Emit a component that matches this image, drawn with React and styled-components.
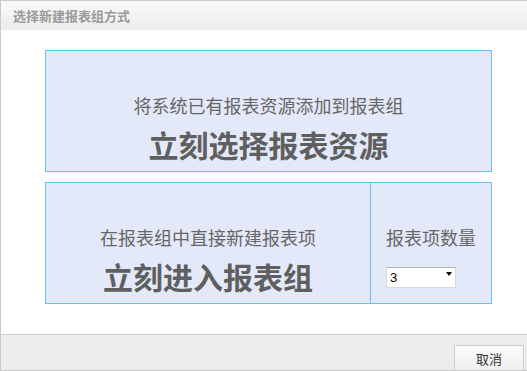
import React from "react";
import styled, { createGlobalStyle } from "styled-components";

const Global = createGlobalStyle`
  html, body { margin: 0; padding: 0; background: #fff; }
  body { font-family: "Noto Sans CJK SC", "Noto Sans", sans-serif; }
  * { box-sizing: border-box; }
`;

const Window = styled.div`
  width: 527px;
  height: 371px;
  border: 1px solid #c9c9c9;
  border-right: none;
  display: flex;
  flex-direction: column;
  background: #fff;
  overflow: hidden;
`;

const TitleBar = styled.div`
  height: 29px;
  flex: none;
  display: flex;
  align-items: center;
  padding-left: 12px;
  background: linear-gradient(#fafafa, #ececec);
  color: #999;
  font-size: 13px;
  font-weight: bold;
`;

const Content = styled.div`
  flex: 1;
  display: flex;
  flex-direction: column;
  gap: 10px;
  padding: 20px 0 0 44px;
`;

const Card = styled.div`
  width: 447px;
  height: 122px;
  border: 1px solid #62c4f5;
  background: #e3e9f9;
  display: flex;
  cursor: pointer;
`;

const Panel = styled.div`
  flex: ${(p) => (p.$grow ? 1 : "none")};
  width: ${(p) => (p.$width ? p.$width : "auto")};
  border-left: ${(p) => (p.$divider ? "1px solid #62c4f5" : "none")};
  display: flex;
  flex-direction: column;
  align-items: ${(p) => (p.$align || "center")};
  padding-top: 43px;
  padding-left: ${(p) => p.$padLeft || 0};
`;

const Hint = styled.div`
  font-size: 18px;
  line-height: 22px;
  color: #666;
  white-space: nowrap;
`;

const Action = styled.div`
  margin-top: 10px;
  font-size: 30px;
  line-height: 36px;
  font-weight: bold;
  color: #5f5f5f;
  white-space: nowrap;
`;

const SelectWrap = styled.div`
  position: relative;
  margin-top: 15px;
  width: 70px;
  height: 21px;
`;

const Select = styled.select`
  appearance: none;
  width: 100%;
  height: 100%;
  border: 1px solid #d8d8d8;
  border-top-color: #b0b0b0;
  background: #fff;
  font-family: "Liberation Sans", Arial, sans-serif;
  font-size: 13px;
  color: #000;
  padding: 0 0 0 3px;
  outline: none;
  border-radius: 0;
`;

const Arrow = styled.span`
  position: absolute;
  right: 4px;
  top: 9px;
  width: 0;
  height: 0;
  border-left: 3.5px solid transparent;
  border-right: 3.5px solid transparent;
  border-top: 4px solid #000;
  pointer-events: none;
`;

const Footer = styled.div`
  height: 36px;
  flex: none;
  border-top: 1px solid #cccccc;
  background: #ececec;
  display: flex;
  justify-content: flex-end;
  align-items: flex-start;
  padding: 10px 3px 0 0;
`;

const Button = styled.button`
  width: 70px;
  height: 28px;
  border: 1px solid #cfcfcf;
  background: linear-gradient(#fbfbfb, #ededed);
  font-family: "Noto Sans CJK SC", sans-serif;
  font-size: 13px;
  color: #333;
  padding: 0;
  padding-bottom: 2px;
`;

export default function App() {
  return (
    <>
      <Global />
      <Window>
        <TitleBar>选择新建报表组方式</TitleBar>
        <Content>
          <Card>
            <Panel $grow>
              <Hint>将系统已有报表资源添加到报表组</Hint>
              <Action>立刻选择报表资源</Action>
            </Panel>
          </Card>
          <Card>
            <Panel $grow>
              <Hint>在报表组中直接新建报表项</Hint>
              <Action>立刻进入报表组</Action>
            </Panel>
            <Panel $divider $width="121px" $align="flex-start" $padLeft="15px">
              <Hint>报表项数量</Hint>
              <SelectWrap>
                <Select defaultValue="3">
                  <option value="1">1</option>
                  <option value="2">2</option>
                  <option value="3">3</option>
                  <option value="4">4</option>
                  <option value="5">5</option>
                </Select>
                <Arrow />
              </SelectWrap>
            </Panel>
          </Card>
        </Content>
        <Footer>
          <Button>取消</Button>
        </Footer>
      </Window>
    </>
  );
}
